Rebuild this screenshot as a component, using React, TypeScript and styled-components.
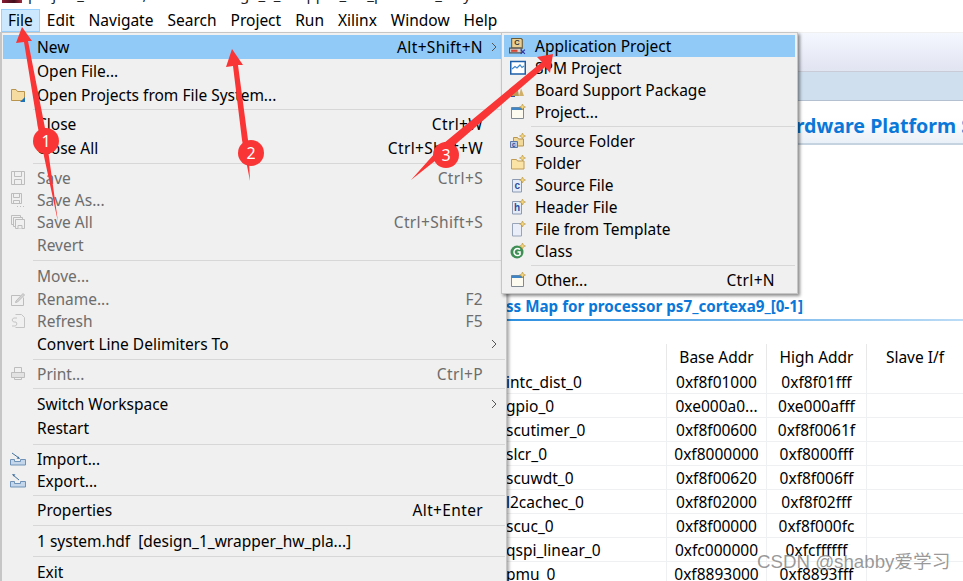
import React from 'react';
import styled, { createGlobalStyle } from 'styled-components';

const UI_FONT = '"Noto Sans", "Open Sans", "Liberation Sans", sans-serif';

const GlobalStyle = createGlobalStyle`
  html, body {
    margin: 0;
    padding: 0;
    background: #fff;
  }
  body {
    font-family: ${UI_FONT};
    font-size: 15.5px;
    color: #000;
  }
`;

const Page = styled.div`
  position: relative;
  width: 963px;
  height: 581px;
  overflow: hidden;
  background: #fff;
  display: flex;
  flex-direction: column;
`;

const TitleBar = styled.div`
  height: 8px;
  overflow: hidden;
  display: flex;
  align-items: flex-end;
  gap: 6px;
  padding-left: 2px;
  flex: none;
`;

const TitleIcon = styled.div`
  width: 20px;
  height: 3px;
  flex: none;
  align-self: flex-start;
  background: linear-gradient(90deg, #8a1c34, #40101c 60%, #a52a3c);
`;

// only the descenders of the window title show above the menu bar
const TitleText = styled.div`
  font-size: 15px;
  line-height: 20px;
  height: 20px;
  margin-bottom: 4px;
  white-space: pre;
  color: #222;
`;

const MenuBar = styled.div`
  height: 24px;
  flex: none;
  display: flex;
  align-items: center;
  padding-left: 1px;
`;

const MenuTitle = styled.div<{ $active?: boolean }>`
  height: 23px;
  box-sizing: border-box;
  padding: 0 6px;
  display: flex;
  align-items: center;
  white-space: nowrap;
  background: ${p => (p.$active ? '#cce8ff' : 'transparent')};
  border: 1px solid ${p => (p.$active ? '#99d1ff' : 'transparent')};
`;

const Workspace = styled.div`
  flex: 1;
  min-height: 0;
  padding-left: 505px;
  display: flex;
  flex-direction: column;
`;

const TabStrip = styled.div`
  height: 40px;
  flex: none;
  box-sizing: border-box;
  background: linear-gradient(#f4f7fe, #e1e4f1);
  border-top: 1px solid #f0f0f0;
  border-bottom: 1px solid #c9ccd6;
`;

const ToolStrip = styled.div`
  height: 29px;
  flex: none;
  box-sizing: border-box;
  background: #cfdfee;
  border-bottom: 1px solid #b4c0cf;
`;

const Banner = styled.div`
  height: 44px;
  flex: none;
  box-sizing: border-box;
  background: linear-gradient(#fff 40%, #eaf0f8);
  border-bottom: 2px solid #c5d2df;
  display: flex;
  align-items: center;
  justify-content: flex-end;
  overflow: hidden;
  white-space: nowrap;
`;

const BannerTitle = styled.div`
  font-size: 19.6px;
  font-weight: 700;
  color: #0a78d8;
  margin-right: -9px;
  padding-top: 6px;
`;

const SectionTitle = styled.div`
  margin-top: 151px;
  height: 25px;
  flex: none;
  box-sizing: border-box;
  padding-left: 1px;
  font-size: 15.2px;
  font-weight: 700;
  line-height: 20px;
  color: #0a78d8;
  white-space: nowrap;
  overflow: hidden;
  border-bottom: 2px solid;
  border-image: linear-gradient(90deg, #2c8fe0, #bcdcf6) 1;
`;

const Table = styled.div`
  margin-top: 23px;
  display: flex;
  flex-direction: column;
`;

const HeaderRow = styled.div`
  display: grid;
  grid-template-columns: 161px 100px 100px 1fr;
  height: 26px;
`;

const HeaderCell = styled.div`
  text-align: center;
  line-height: 27px;
  border-left: 1px solid #e8e8e8;
  &:first-child {
    border-left: none;
  }
`;

const Row = styled.div`
  display: grid;
  grid-template-columns: 161px 100px 100px 1fr;
  height: 24px;
  box-sizing: border-box;
  border-bottom: 1px solid #eff0f1;
`;

const Cell = styled.div<{ $name?: boolean }>`
  text-align: ${p => (p.$name ? 'left' : 'center')};
  line-height: 25px;
  white-space: nowrap;
  overflow: hidden;
  border-left: ${p => (p.$name ? 'none' : '1px solid #eff0f1')};
  padding-left: ${p => (p.$name ? '1px' : '0')};
`;

const FileMenu = styled.div`
  position: absolute;
  left: 0;
  top: 32px;
  width: 507px;
  height: 560px;
  box-sizing: border-box;
  background: #f0f0f0;
  border: 1px solid #c6c6c6;
  border-left-width: 2px;
  padding: 2px 1px 0 1px;
  box-shadow: 2px 2px 3px rgba(0, 0, 0, 0.35);
`;

const SubMenu = styled.div`
  position: absolute;
  left: 501px;
  top: 32px;
  width: 297px;
  height: 262px;
  box-sizing: border-box;
  background: #f0f0f0;
  border: 1px solid #c6c6c6;
  padding: 2px;
  box-shadow: 2px 2px 3px rgba(0, 0, 0, 0.45);
`;

const Item = styled.div<{ $h: number; $hot?: boolean; $off?: boolean }>`
  height: ${p => p.$h}px;
  display: flex;
  align-items: center;
  white-space: pre;
  background: ${p => (p.$hot ? '#91c9f7' : 'transparent')};
  color: ${p => (p.$off ? '#6d6d6d' : '#000')};
`;

const IconSlot = styled.div<{ $w: number }>`
  width: ${p => p.$w}px;
  flex: none;
  display: flex;
  align-items: center;
  justify-content: center;
  padding-right: 4px;
  box-sizing: border-box;
`;

const Label = styled.div`
  flex: 1;
`;

const Shortcut = styled.div`
  flex: 1;
  text-align: right;
  letter-spacing: 0.35px;
`;

const Chevron = styled.div<{ $w: number }>`
  width: ${p => p.$w}px;
  flex: none;
  display: flex;
  justify-content: center;
`;

const Separator = styled.div<{ $h: number; $left: number }>`
  height: ${p => p.$h}px;
  display: flex;
  align-items: center;
  padding-left: ${p => p.$left}px;
  &::after {
    content: '';
    display: block;
    height: 1px;
    flex: 1;
    background: #d7d7d7;
  }
`;

const Annotations = styled.svg`
  position: absolute;
  left: 0;
  top: 0;
  pointer-events: none;
`;

const Badge = styled.div<{ $x: number; $y: number }>`
  position: absolute;
  left: ${p => p.$x - 13}px;
  top: ${p => p.$y - 13}px;
  width: 26px;
  height: 26px;
  border-radius: 50%;
  background: #f93535;
  color: #fff;
  font-size: 16px;
  line-height: 26px;
  text-align: center;
`;

const Watermark = styled.div`
  position: absolute;
  left: 757px;
  top: 550px;
  font-family: "Liberation Sans", "Noto Sans CJK SC", sans-serif;
  font-size: 18.7px;
  line-height: 24px;
  color: rgba(120, 120, 120, 0.75);
  white-space: nowrap;
`;

// 16px icons, drawn by hand since none of the packs have the Eclipse set
const OpenProjectsIcon = () => (
  <svg width="16" height="16" viewBox="0 0 16 16">
    <path d="M1.500 2.500h4.500l1.500 2h7v9h-13z" fill="#f6dca0" stroke="#b8944f" />
    <path d="M10 15l5-5v5z" fill="#1f6fb5" />
  </svg>
);

const DiskIcon = () => (
  <svg width="16" height="16" viewBox="0 0 16 16" fill="none" stroke="#bdbdbd">
    <path d="M1.500 1.500h13v13h-13z" />
    <path d="M4.500 1.500v5h7v-5M4.500 14.500v-5h7v5" />
  </svg>
);

const SaveAsIcon = () => (
  <svg width="16" height="16" viewBox="0 0 16 16" fill="none" stroke="#bdbdbd">
    <path d="M1.500 1.500h10v10h-10z" />
    <path d="M3.500 1.500v4h6v-4M3.500 11.500v-3h6v3" />
    <path d="M7 14.500h1M10 14.500h1M13 14.500h1" />
  </svg>
);

const SaveAllIcon = () => (
  <svg width="16" height="16" viewBox="0 0 16 16" fill="#f0f0f0" stroke="#bdbdbd">
    <path d="M1.500 1.500h9v9h-9z" />
    <path d="M3.500 3.500h9v9h-9z" />
    <path d="M5.500 5.500h9v9h-9z" />
    <path d="M8 14.500v-3h4v3" />
  </svg>
);

const RenameIcon = () => (
  <svg width="16" height="16" viewBox="0 0 16 16" fill="none" stroke="#bdbdbd">
    <path d="M1.500 4.500h9M1.500 4.500v10h12v-8" />
    <path d="M6 10l7-7.500 1.500 1.500-7 7-2 .5z" fill="#d4d4d4" />
  </svg>
);

const RefreshIcon = () => (
  <svg width="16" height="16" viewBox="0 0 16 16" fill="none" stroke="#c4c4c4">
    <path d="M5.500 1.500h6l3 3v10h-9" />
    <path d="M7 5H3.500L2 7l1.500 2H6l1 2-1.500 2H2" />
  </svg>
);

const PrintIcon = () => (
  <svg width="16" height="16" viewBox="0 0 16 16" fill="none" stroke="#bdbdbd">
    <path d="M4.500 1.500h7v5h-7z" />
    <path d="M1.500 6.500h13v5h-13z" fill="#e2e2e2" />
    <path d="M4.500 11.500h7v2h-7z" />
  </svg>
);

const ImportIcon = () => (
  <svg width="16" height="16" viewBox="0 0 16 16" fill="none">
    <path d="M.5 8.500h4v2h6v-2h5v5.500h-15z" fill="#c3d6ea" stroke="#6f93b8" />
    <path d="M2 2l7 5" stroke="#3f6f9f" />
    <path d="M10 8l-3.500-.5 2-2z" fill="#3f6f9f" />
  </svg>
);

const ExportIcon = () => (
  <svg width="16" height="16" viewBox="0 0 16 16" fill="none">
    <path d="M.5 8.500h4v2h6v-2h5v5.500h-15z" fill="#c3d6ea" stroke="#6f93b8" />
    <path d="M9 7l-6-5" stroke="#3f6f9f" />
    <path d="M2 1l3.500.5-2 2z" fill="#3f6f9f" />
  </svg>
);

const Sparkle = () => (
  <path d="M12.500 0l.9 2.100 2.100.9-2.100.9-.9 2.100-.9-2.100-2.100-.9 2.100-.9z" fill="#f6d77c" stroke="#a8873a" strokeWidth=".5" />
);

const AppProjectIcon = () => (
  <svg width="17" height="17" viewBox="0 0 16 16">
    <path d="M2.500 .5h9l1 1v8h-10z" fill="#e9cf94" stroke="#6b5a33" />
    <text x="5" y="7" fontSize="7" fontWeight="700" fill="#333" fontFamily="Liberation Sans, sans-serif">C</text>
    <path d="M.5 9.500h11v4.500h-11z" fill="#cfcfcf" stroke="#555" />
    <path d="M2 11h6v2h-6z" fill="#d64534" />
    <path d="M11 11l4 4M15 11l-4 4" stroke="#2d2f9e" />
  </svg>
);

const SpmIcon = () => (
  <svg width="16" height="16" viewBox="0 0 16 16">
    <path d="M.75 1.500h14.500v12.500h-14.500z" fill="#fff" stroke="#1d5fa8" strokeWidth="1.500" />
    <path d="M2 9l3-2.500 2 1.500 3-3 2 2.500 2-1.500" fill="none" stroke="#3f88cf" strokeWidth="1.200" />
  </svg>
);

const BspIcon = () => (
  <svg width="16" height="16" viewBox="0 0 16 16">
    <path d="M1 14l2-9 2 4 2-6 2 11z" fill="#b99a56" />
    <path d="M9 14l2-8 3 8z" fill="#d1b06a" />
    <path d="M1 14h4v1h-4z" fill="#2f4fa0" />
  </svg>
);

const ProjectIcon = () => (
  <svg width="16" height="16" viewBox="0 0 16 16">
    <path d="M1.500 3.500h12v11h-12z" fill="#fdfaf0" stroke="#7f8a94" />
    <path d="M1.500 3.500h12v2.500h-12z" fill="#3f85c6" />
    <Sparkle />
  </svg>
);

const SourceFolderIcon = () => (
  <svg width="16" height="16" viewBox="0 0 16 16">
    <path d="M3.500 4.500h4l1 1.500h5v7h-10z" fill="#f2d999" stroke="#b8944f" />
    <path d="M.5 8.500h7v6h-7z" fill="#b8cbe8" stroke="#5d78a8" />
    <text x="2" y="14" fontSize="6.500" fontWeight="700" fill="#2d4f9e" fontFamily="Liberation Sans, sans-serif">c</text>
    <Sparkle />
  </svg>
);

const FolderIcon = () => (
  <svg width="16" height="16" viewBox="0 0 16 16">
    <path d="M1.500 4.500h5l1 1.500h6.500v8h-12.500z" fill="#fbe3a6" stroke="#c19b54" />
    <Sparkle />
  </svg>
);

const SourceFileIcon = () => (
  <svg width="16" height="16" viewBox="0 0 16 16">
    <path d="M2.500 2.500h9v12.500h-9z" fill="#e6ecf7" stroke="#8c9ab4" />
    <text x="4.500" y="12" fontSize="10" fontWeight="700" fill="#2c4ea0" fontFamily="Liberation Sans, sans-serif">c</text>
    <Sparkle />
  </svg>
);

const HeaderFileIcon = () => (
  <svg width="16" height="16" viewBox="0 0 16 16">
    <path d="M2.500 2.500h9v12.500h-9z" fill="#e6ecf7" stroke="#8c9ab4" />
    <text x="4" y="12" fontSize="10" fontWeight="700" fill="#2c4ea0" fontFamily="Liberation Sans, sans-serif">h</text>
    <Sparkle />
  </svg>
);

const TemplateIcon = () => (
  <svg width="16" height="16" viewBox="0 0 16 16">
    <path d="M2.500 2.500h9v12.500h-9z" fill="#e9eef8" stroke="#98a4b8" />
    <Sparkle />
  </svg>
);

const ClassIcon = () => (
  <svg width="16" height="16" viewBox="0 0 16 16">
    <circle cx="7" cy="9" r="6.500" fill="#3f8f55" />
    <path d="M10 6.500a3.500 3.500 0 1 0 0 5V9H7.500" fill="none" stroke="#fff" strokeWidth="1.600" />
    <Sparkle />
  </svg>
);

type MenuEntry =
  | { sep: number }
  | {
      label: string;
      h: number;
      key2?: string;
      icon?: React.ReactNode;
      off?: boolean;
      hot?: boolean;
      arrow?: boolean;
    };

const FILE_ENTRIES: MenuEntry[] = [
  { label: 'New', h: 24, key2: 'Alt+Shift+N', hot: true, arrow: true },
  { label: 'Open File...', h: 24 },
  { label: 'Open Projects from File System...', h: 24, icon: <OpenProjectsIcon /> },
  { sep: 5 },
  { label: 'Close', h: 24, key2: 'Ctrl+W' },
  { label: 'Close All', h: 24, key2: 'Ctrl+Shift+W' },
  { sep: 7 },
  { label: 'Save', h: 22, key2: 'Ctrl+S', off: true, icon: <DiskIcon /> },
  { label: 'Save As...', h: 22, off: true, icon: <SaveAsIcon /> },
  { label: 'Save All', h: 22, key2: 'Ctrl+Shift+S', off: true, icon: <SaveAllIcon /> },
  { label: 'Revert', h: 24, off: true },
  { sep: 7 },
  { label: 'Move...', h: 24, off: true },
  { label: 'Rename...', h: 22, key2: 'F2', off: true, icon: <RenameIcon /> },
  { label: 'Refresh', h: 22, key2: 'F5', off: true, icon: <RefreshIcon /> },
  { label: 'Convert Line Delimiters To', h: 24, arrow: true },
  { sep: 7 },
  { label: 'Print...', h: 22, key2: 'Ctrl+P', off: true, icon: <PrintIcon /> },
  { sep: 7 },
  { label: 'Switch Workspace', h: 24, arrow: true },
  { label: 'Restart', h: 24 },
  { sep: 8 },
  { label: 'Import...', h: 22, icon: <ImportIcon /> },
  { label: 'Export...', h: 22, icon: <ExportIcon /> },
  { sep: 6 },
  { label: 'Properties', h: 24, key2: 'Alt+Enter' },
  { sep: 7 },
  { label: '1 system.hdf  [design_1_wrapper_hw_pla...]', h: 24 },
  { sep: 7 },
  { label: 'Exit', h: 24 },
];

const NEW_ENTRIES: MenuEntry[] = [
  { label: 'Application Project', h: 22, hot: true, icon: <AppProjectIcon /> },
  { label: 'SPM Project', h: 22, icon: <SpmIcon /> },
  { label: 'Board Support Package', h: 22, icon: <BspIcon /> },
  { label: 'Project...', h: 22, icon: <ProjectIcon /> },
  { sep: 7 },
  { label: 'Source Folder', h: 22, icon: <SourceFolderIcon /> },
  { label: 'Folder', h: 22, icon: <FolderIcon /> },
  { label: 'Source File', h: 22, icon: <SourceFileIcon /> },
  { label: 'Header File', h: 22, icon: <HeaderFileIcon /> },
  { label: 'File from Template', h: 22, icon: <TemplateIcon /> },
  { label: 'Class', h: 22, icon: <ClassIcon /> },
  { sep: 7 },
  { label: 'Other...', h: 22, key2: 'Ctrl+N', icon: <ProjectIcon /> },
];

const renderEntries = (entries: MenuEntry[], gutter: number, slot: number, keyPad: number) =>
  entries.map((entry, i) => {
    if ('sep' in entry) {
      return <Separator key={i} $h={entry.sep} $left={gutter} />;
    }
    return (
      <Item key={i} $h={entry.h} $hot={entry.hot} $off={entry.off}>
        <IconSlot $w={slot}>{entry.icon}</IconSlot>
        <Label>{entry.label}</Label>
        {entry.key2 && <Shortcut>{entry.key2}</Shortcut>}
        <Chevron $w={keyPad}>
          {entry.arrow && (
            <svg width="6" height="10" viewBox="0 0 6 10" fill="none" stroke="#555">
              <path d="M1 1l4 4-4 4" />
            </svg>
          )}
        </Chevron>
      </Item>
    );
  });

const MENU_TITLES = ['File', 'Edit', 'Navigate', 'Search', 'Project', 'Run', 'Xilinx', 'Window', 'Help'];

const ROWS = [
  ['intc_dist_0', '0xf8f01000', '0xf8f01fff'],
  ['gpio_0', '0xe000a0...', '0xe000afff'],
  ['scutimer_0', '0xf8f00600', '0xf8f0061f'],
  ['slcr_0', '0xf8000000', '0xf8000fff'],
  ['scuwdt_0', '0xf8f00620', '0xf8f006ff'],
  ['l2cachec_0', '0xf8f02000', '0xf8f02fff'],
  ['scuc_0', '0xf8f00000', '0xf8f000fc'],
  ['qspi_linear_0', '0xfc000000', '0xfcffffff'],
  ['pmu_0', '0xf8893000', '0xf8893fff'],
];

const App: React.FC = () => (
  <Page>
    <GlobalStyle />
    <TitleBar>
      <TitleIcon />
      <TitleText>project_1 - Xilinx, SDK IDE design_1_wrapper_hw_platform_0/system.hdf - Xilinx SDK</TitleText>
    </TitleBar>
    <MenuBar>
      {MENU_TITLES.map((title, i) => (
        <MenuTitle key={title} $active={i === 0}>
          {title}
        </MenuTitle>
      ))}
    </MenuBar>
    <Workspace>
      <TabStrip />
      <ToolStrip />
      <Banner>
        <BannerTitle>Hardware Platform S</BannerTitle>
      </Banner>
      <SectionTitle>ss Map for processor ps7_cortexa9_[0-1]</SectionTitle>
      <Table>
        <HeaderRow>
          <HeaderCell />
          <HeaderCell>Base Addr</HeaderCell>
          <HeaderCell>High Addr</HeaderCell>
          <HeaderCell>Slave I/f</HeaderCell>
        </HeaderRow>
        {ROWS.map(([name, base, high]) => (
          <Row key={name}>
            <Cell $name>{name}</Cell>
            <Cell>{base}</Cell>
            <Cell>{high}</Cell>
            <Cell />
          </Row>
        ))}
      </Table>
    </Workspace>
    <FileMenu>{renderEntries(FILE_ENTRIES, 30, 34, 22)}</FileMenu>
    <SubMenu>{renderEntries(NEW_ENTRIES, 27, 31, 20)}</SubMenu>
    <Annotations width="963" height="581" viewBox="0 0 963 581">
      <g fill="#f93535">
        <polygon points="22,27 32,41 28,41 45,128 58,222 38,128 24,42 16,43" />
        <polygon points="232,49 243,65 238,65 248,140 250,181 242,140 233,66 226,67" />
        <polygon points="553,54 550,73 545,67 450,149 411,180 444,143 542,62 537,57" />
      </g>
    </Annotations>
    <Badge $x={46} $y={141}>1</Badge>
    <Badge $x={251} $y={153}>2</Badge>
    <Badge $x={446} $y={155}>3</Badge>
    <Watermark>CSDN @shabby爱学习</Watermark>
  </Page>
);

export default App;
